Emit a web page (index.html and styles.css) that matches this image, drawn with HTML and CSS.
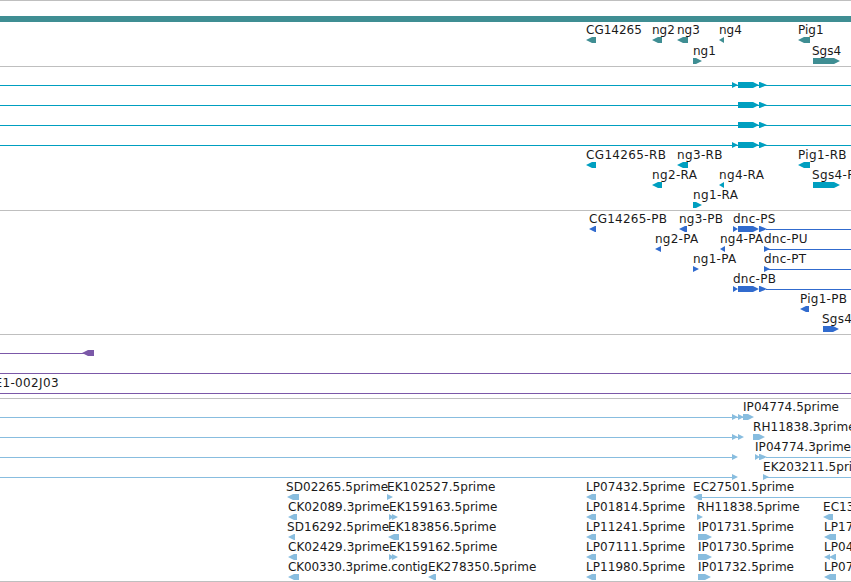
FILE: index.html
```
<!DOCTYPE html>
<html lang="en">
<head>
  <meta charset="UTF-8">
  <title>Genome tracks</title>
  <link rel="stylesheet" href="styles.css">
</head>
<body>
  <main id="browser">
    <section class="track gene">
      <svg viewBox="0 1 851 65" width="851" height="65">
        <rect x="0" y="16" width="851" height="6"/>
        <g transform="translate(0,34)">
          <text x="586">CG14265</text><path d="M586 6l6-3h4v6h-4z"/>
          <text x="652">ng2</text><path d="M652 6l6-3h4v6h-4z"/>
          <text x="677">ng3</text><path d="M677 6l6-3h5v6h-5z"/>
          <text x="719">ng4</text><path d="M719 6l5-3v6z"/>
          <text x="798">Pig1</text><path d="M798 6l6-3h6v6h-6z"/>
        </g>
        <g transform="translate(0,55)">
          <text x="693">ng1</text><path d="M693 3h3l6 3-6 3h-3z"/>
          <text x="812">Sgs4</text><path d="M813 3h21l6 3-6 3h-21z"/>
        </g>
      </svg>
    </section>
    <section class="track transcript">
      <svg viewBox="0 67 851 143" width="851" height="143">
        <g transform="translate(0,79)">
          <path class="intron" d="M0 6.5h851"/>
          <path d="M732 3l6 3-6 3zM738 3h15l6 3-6 3h-15zM759 3h1l7 3-7 3h-1z"/>
        </g>
        <g transform="translate(0,99)">
          <path class="intron" d="M0 6.5h851"/>
          <path d="M738 3h15l6 3-6 3h-15zM759 3h1l7 3-7 3h-1z"/>
        </g>
        <g transform="translate(0,119)">
          <path class="intron" d="M0 6.5h851"/>
          <path d="M738 3h15l6 3-6 3h-15zM759 3h1l7 3-7 3h-1z"/>
        </g>
        <g transform="translate(0,139)">
          <path class="intron" d="M0 6.5h851"/>
          <path d="M732 3l6 3-6 3zM738 3h15l6 3-6 3h-15zM759 3h1l7 3-7 3h-1z"/>
        </g>
        <g transform="translate(0,159)">
          <text x="586">CG14265-RB</text><path d="M586 6l6-3h4v6h-4z"/>
          <text x="677">ng3-RB</text><path d="M677 6l6-3h5v6h-5z"/>
          <text x="798">Pig1-RB</text><path d="M798 6l6-3h6v6h-6z"/>
        </g>
        <g transform="translate(0,179)">
          <text x="652">ng2-RA</text><path d="M652 6l6-3h4v6h-4z"/>
          <text x="719">ng4-RA</text><path d="M719 6l5-3v6z"/>
          <text x="812">Sgs4-RA</text><path d="M813 3h21l6 3-6 3h-21z"/>
        </g>
        <g transform="translate(0,199)">
          <text x="693">ng1-RA</text><path d="M693 3h3l6 3-6 3h-3z"/>
        </g>
      </svg>
    </section>
    <section class="track cds">
      <svg viewBox="0 211 851 123" width="851" height="123">
        <g transform="translate(0,223)">
          <text x="589">CG14265-PB</text><path d="M589 6l6-3h1v6h-1z"/>
          <text x="679">ng3-PB</text><path d="M679 6l6-3h2v6h-2z"/>
          <path class="intron" d="M766 6.5h85"/>
          <text x="733">dnc-PS</text><path d="M733 3l5 3-5 3zM738 3h15l6 3-6 3h-15zM759 3h1l7 3-7 3h-1z"/>
        </g>
        <g transform="translate(0,243)">
          <text x="655">ng2-PA</text><path d="M655 6l6-3v6z"/>
          <text x="720">ng4-PA</text><path d="M720 6l5-3v6z"/>
          <path class="intron" d="M768 6.5h83"/>
          <text x="764">dnc-PU</text><path d="M764 3l6 3-6 3z"/>
        </g>
        <g transform="translate(0,263)">
          <text x="693">ng1-PA</text><path d="M693 3l6 3-6 3z"/>
          <path class="intron" d="M768 6.5h83"/>
          <text x="764">dnc-PT</text><path d="M764 3l6 3-6 3z"/>
        </g>
        <g transform="translate(0,283)">
          <path class="intron" d="M766 6.5h85"/>
          <text x="733">dnc-PB</text><path d="M733 3l5 3-5 3zM738 3h15l6 3-6 3h-15zM759 3h1l7 3-7 3h-1z"/>
        </g>
        <g transform="translate(0,303)">
          <text x="800">Pig1-PB</text><path d="M800 6l6-3h3v6h-3z"/>
        </g>
        <g transform="translate(0,323)">
          <text x="822">Sgs4</text><path d="M823 3h10l6 3-6 3h-10z"/>
        </g>
      </svg>
    </section>
    <section class="track clone">
      <svg viewBox="0 335 851 63" width="851" height="63">
        <g transform="translate(0,347)">
          <path class="intron" d="M0 6.5h84"/><path d="M82 6l6-3h6v6h-6z"/>
        </g>
        <path class="intron" d="M0 373.5h851M0 393.5h851"/>
        <text x="-5.5" y="387">E1-002J03</text>
      </svg>
    </section>
    <section class="track est">
      <svg viewBox="0 399 851 182" width="851" height="182">
        <g transform="translate(0,411)">
          <path class="intron" d="M0 6.5h743"/>
          <path d="M732 3l6 3-6 3zM738 3l6 3-6 3zM743 3h5l6 3-6 3h-5z"/>
          <text x="743">IP04774.5prime</text>
        </g>
        <g transform="translate(0,431)">
          <path class="intron" d="M0 6.5h740"/>
          <path d="M732 3l6 3-6 3zM738 3l6 3-6 3z"/>
          <text x="753">RH11838.3prime</text><path d="M753 3h6l6 3-6 3h-6z"/>
        </g>
        <g transform="translate(0,451)">
          <path class="intron" d="M0 6.5h734M766 6.5h85"/>
          <path d="M732 3l6 3-6 3z"/>
          <text x="755">IP04774.3prime</text><path d="M755 3l5 3-5 3zM759 3h1l7 3-7 3h-1z"/>
        </g>
        <g transform="translate(0,471)">
          <path class="intron" d="M0 6.5h734M766 6.5h85"/>
          <path d="M732 3l6 3-6 3z"/>
          <text x="763">EK203211.5prime</text><path d="M763 3l6 3-6 3z"/>
        </g>
        <g transform="translate(0,491)">
          <text x="286">SD02265.5prime</text><path d="M287 6l6-3h6v6h-6z"/>
          <text x="387">EK102527.5prime</text><path d="M387 3l6 3-6 3z"/>
          <text x="586">LP07432.5prime</text><path d="M586 6l6-3h4v6h-4z"/>
          <path class="intron" d="M702 6.5h149"/>
          <text x="693">EC27501.5prime</text><path d="M693 6l6-3h3v6h-3z"/>
        </g>
        <g transform="translate(0,511)">
          <text x="288">CK02089.3prime</text><path d="M288 6l6-3h3v6h-3z"/>
          <text x="389">EK159163.5prime</text><path d="M389 3l5 3-5 3zM392 3l6 3-6 3z"/>
          <text x="586">LP01814.5prime</text><path d="M586 6l6-3h4v6h-4z"/>
          <text x="697">RH11838.5prime</text><path d="M697 3l6 3-6 3z"/>
          <text x="823" class="cut">EC13</text><path d="M823 6l6-3h4v6h-4z"/>
        </g>
        <g transform="translate(0,531)">
          <text x="287">SD16292.5prime</text><path d="M288 6l6-3h1v6h-1z"/>
          <text x="388">EK183856.5prime</text><path d="M388 6l6-3h5v6h-5z"/>
          <text x="586">LP11241.5prime</text><path d="M586 6l6-3h4v6h-4z"/>
          <text x="698">IP01731.5prime</text><path d="M698 3h8l6 3-6 3h-8z"/>
          <text x="824">LP17</text><path d="M824 6l6-3h6v6h-6z"/>
        </g>
        <g transform="translate(0,551)">
          <text x="288">CK02429.3prime</text><path d="M288 6l6-3h3v6h-3z"/>
          <text x="389">EK159162.5prime</text><path d="M389 3l5 3-5 3zM392 3l6 3-6 3z"/>
          <text x="586">LP07111.5prime</text><path d="M586 6l6-3h4v6h-4z"/>
          <text x="698">IP01730.5prime</text><path d="M698 3h8l6 3-6 3h-8z"/>
          <text x="824">LP04</text><path d="M824 6l6-3v6zM829 6l6-3h1v6h-1z"/>
        </g>
        <g transform="translate(0,571)">
          <text x="288" class="long">CK00330.3prime.contig</text><path d="M288 6l6-3h5v6h-5z"/>
          <text x="428">EK278350.5prime</text><path d="M428 6l6-3h2v6h-2z"/>
          <text x="586">LP11980.5prime</text><path d="M586 6l6-3h4v6h-4z"/>
          <text x="698">IP01732.5prime</text><path d="M698 3h7l6 3-6 3h-7z"/>
          <text x="824">LP07</text><path d="M824 6l6-3h6v6h-6z"/>
        </g>
      </svg>
    </section>
  </main>
</body>
</html>
```

FILE: styles.css
```
body {
    margin: 0;
    background: #fff;
    overflow: hidden;
}
#browser {
    width: 851px;
    border-bottom: 1px solid #bfbfbf;
}
.track {
    border-top: 1px solid #bfbfbf;
}
.track svg {
    display: block;
    fill: currentColor;
}
.track text {
    font-family: 'DejaVu Sans', sans-serif;
    font-size: 12px;
    fill: #1a1a1a;
}
.transcript text, .clone text {
    letter-spacing: 0.35px;
}
.cds text {
    letter-spacing: 0.25px;
}
.est text {
    letter-spacing: 0.05px;
}
.est text.long {
    letter-spacing: -0.1px;
}
.intron {
    fill: none;
    stroke: currentColor;
    stroke-width: 1;
}
.gene {
    color: #3f8e93;
}
.transcript {
    color: #009fc0;
}
.cds {
    color: #316bce;
}
.clone {
    color: #7b58a8;
}
.est {
    color: #88bddf;
}
```
